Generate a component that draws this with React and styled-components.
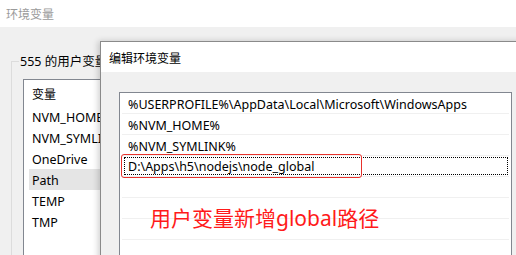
import React from 'react';
import styled, { createGlobalStyle } from 'styled-components';

const GlobalStyle = createGlobalStyle`
  html, body {
    margin: 0;
    padding: 0;
    background: #f0f0f0;
  }
  body {
    font-family: "Noto Sans", "Noto Sans CJK SC", sans-serif;
    font-size: 12px;
    color: #000;
  }
`;

const Desktop = styled.div`
  position: relative;
  width: 516px;
  height: 255px;
  overflow: hidden;
  background: #f0f0f0;
`;

const Window = styled.div`
  display: flex;
  flex-direction: column;
  height: 100%;
`;

const TitleBar = styled.div`
  height: 27px;
  flex: none;
  display: flex;
  align-items: center;
  padding-left: 6px;
  background: #fff;
  color: ${(p) => (p.$dim ? '#9a9a9a' : '#000')};
  font-family: "Noto Sans CJK SC", sans-serif;
  font-size: 12px;
`;

const Body = styled.div`
  flex: 1;
  background: #f0f0f0;
  padding: 34px 0 0 11px;
`;

const GroupBox = styled.fieldset`
  margin: 0;
  padding: 0 0 0 11px;
  border: 0;
  border-left: 1px solid #dcdcdc;
  border-top: 1px solid #dcdcdc;
  position: relative;
  height: 300px;
`;

const GroupLabel = styled.div`
  position: absolute;
  top: -8px;
  left: 7px;
  padding: 0 1px;
  background: #f0f0f0;
  font-size: 12.5px;
  line-height: 16px;
  font-family: "Noto Sans", "Noto Sans CJK SC", sans-serif;
`;

const VarList = styled.div`
  margin-top: 17px;
  width: 160px;
  height: 220px;
  background: #fff;
  border: 1px solid #828790;
  padding-left: 5px;
  font-size: 12.5px;
`;

const VarHeader = styled.div`
  height: 26px;
  line-height: 22px;
  padding: 3px 0 1px 3px;
  box-sizing: border-box;
  font-family: "Noto Sans CJK SC", sans-serif;
  font-size: 12px;
`;

const VarRow = styled.div`
  height: 21px;
  line-height: 18px;
  padding: 3px 0 0 3px;
  box-sizing: border-box;
  background: ${(p) => (p.$selected ? '#e5e5e5' : 'transparent')};
  white-space: nowrap;
`;

const Dialog = styled.div`
  position: absolute;
  left: 100px;
  top: 41px;
  width: 430px;
  height: 260px;
  display: flex;
  flex-direction: column;
  border: 1px solid #8a8a8a;
  background: #f0f0f0;
  box-shadow: -2px 0 6px rgba(0, 0, 0, 0.18);
`;

const DialogTitle = styled.div`
  height: 30px;
  flex: none;
  display: flex;
  align-items: center;
  padding-left: 8px;
  background: #fff;
  font-family: "Noto Sans CJK SC", sans-serif;
  font-size: 12px;
`;

const DialogBody = styled.div`
  flex: 1;
  padding: 20px 19px 0 18px;
`;

const PathList = styled.div`
  position: relative;
  height: 200px;
  background: #fff;
  border: 1px solid #828790;
  padding: 0 2px;
  font-size: 12.5px;
`;

const PathRow = styled.div`
  height: 21px;
  line-height: 18px;
  padding: 3px 0 0 6px;
  border-bottom: 1px solid #f0f0f0;
  box-sizing: border-box;
  white-space: nowrap;
`;

const EditRow = styled.div`
  position: relative;
  height: 21px;
  border-bottom: 1px solid #f0f0f0;
  box-sizing: border-box;
  padding: 1px 1px 1px 2px;
`;

const EditField = styled.div`
  height: 100%;
  box-sizing: border-box;
  border: 1px dotted #000;
  line-height: 18px;
  padding-left: 3px;
  white-space: nowrap;
`;

const Highlight = styled.div`
  position: absolute;
  left: -1px;
  top: -2px;
  width: 241px;
  height: 24px;
  box-sizing: border-box;
  border: 1px solid #e8322c;
  border-radius: 3px;
`;

const Note = styled.div`
  position: absolute;
  left: 30px;
  top: 111px;
  color: #ff1a1a;
  font-family: "Noto Sans", "Noto Sans CJK SC", sans-serif;
  font-size: 21px;
  line-height: 28px;
  white-space: nowrap;
`;

const vars = [
  { name: 'NVM_HOME' },
  { name: 'NVM_SYMLINK' },
  { name: 'OneDrive' },
  { name: 'Path', selected: true },
  { name: 'TEMP' },
  { name: 'TMP' },
];

const paths = [
  '%USERPROFILE%\\AppData\\Local\\Microsoft\\WindowsApps',
  '%NVM_HOME%',
  '%NVM_SYMLINK%',
];

const App = () => {
  return (
    <Desktop>
      <GlobalStyle />
      <Window>
        <TitleBar $dim>环境变量</TitleBar>
        <Body>
          <GroupBox>
            <GroupLabel>555 的用户变量</GroupLabel>
            <VarList>
              <VarHeader>变量</VarHeader>
              {vars.map((v) => (
                <VarRow key={v.name} $selected={v.selected}>
                  {v.name}
                </VarRow>
              ))}
            </VarList>
          </GroupBox>
        </Body>
      </Window>

      <Dialog>
        <DialogTitle>编辑环境变量</DialogTitle>
        <DialogBody>
          <PathList>
            {paths.map((p) => (
              <PathRow key={p}>{p}</PathRow>
            ))}
            <EditRow>
              <EditField>D:\Apps\h5\nodejs\node_global</EditField>
              <Highlight />
            </EditRow>
            <PathRow />
            <PathRow />
            <PathRow />
            <PathRow />
            <Note>用户变量新增global路径</Note>
          </PathList>
        </DialogBody>
      </Dialog>
    </Desktop>
  );
};

export default App;
